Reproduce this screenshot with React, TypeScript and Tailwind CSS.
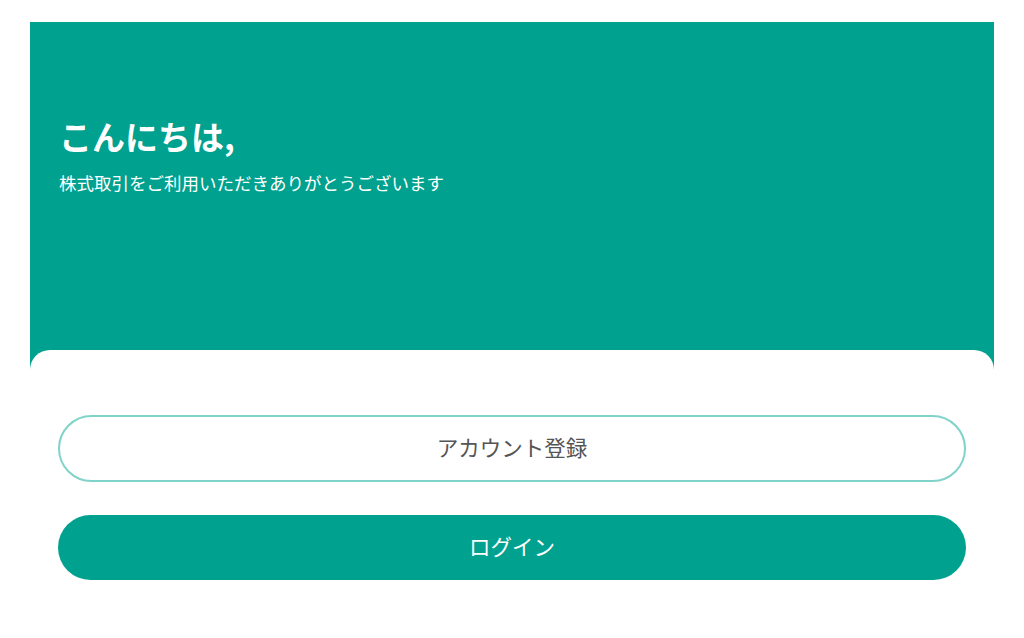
import React from 'react';

const font = { fontFamily: '"Noto Sans CJK JP", "Noto Sans", sans-serif' };

export default function App() {
  return (
    <div className="min-h-[638px] bg-white pt-[22px] px-[30px]" style={font}>
      {/* Greeting panel */}
      <div className="h-[348px] bg-[#00a18f] px-[29px] pt-[92px]">
        <h1 className="text-[33px] font-bold leading-[44px] text-white">こんにちは,</h1>
        <p className="mt-[13px] text-[17.5px] leading-[24px] text-white">株式取引をご利用いただきありがとうございます</p>
      </div>

      {/* Action card */}
      <div className="relative -mt-[20px] rounded-t-[20px] bg-white px-[28px] pt-[65px] pb-[58px]">
        <button className="flex h-[67px] w-full items-center justify-center rounded-full border-2 border-[#80d3c9] bg-white pb-[3px] text-[21.5px] text-[#555]">
          アカウント登録
        </button>
        <button className="mt-[33px] flex h-[65px] w-full items-center justify-center rounded-full bg-[#00a18f] pb-[3px] text-[21.5px] text-white">
          ログイン
        </button>
      </div>
    </div>
  );
}
